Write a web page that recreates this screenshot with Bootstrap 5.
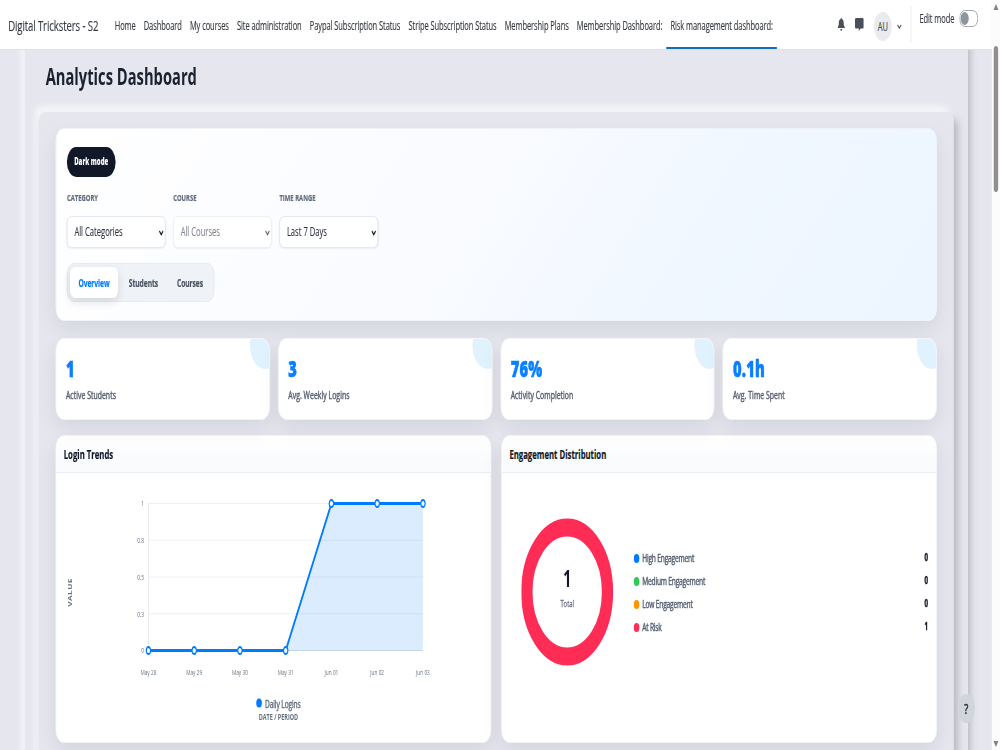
<!DOCTYPE html>
<html lang="en">

<head>
    <meta charset="UTF-8">
    <meta name="viewport" content="width=device-width, initial-scale=1.0">
    <title>Analytics Dashboard</title>
    <!-- Bootstrap CSS -->
    <link href="https://cdn.jsdelivr.net/npm/bootstrap@5.3.0/dist/css/bootstrap.min.css" rel="stylesheet">
    <style>
        body {
            font-family: "Open Sans", "Noto Sans", sans-serif;
            color: #1d2433;
            background: #e5e6ee;
        }

        .viewport {
            width: 1000px;
            height: 750px;
            overflow: hidden;
        }

        /* 1600px wide layout, narrowed to the window */
        .stage {
            width: 1600px;
            height: 750px;
            overflow: hidden;
            transform: scaleX(.625);
            transform-origin: 0 0;
        }

        /* top bar */
        .topbar {
            height: 49px;
            position: relative;
            z-index: 2;
            padding-left: 13px;
            box-shadow: 0 1px 0 #dee2e6;
        }

        .brand {
            width: 164px;
            padding-top: 1px;
            font-size: 15.3px;
            letter-spacing: -.15px;
            color: #343a40;
            -webkit-text-stroke: .15px;
        }

        .topnav {
            font-size: 12px;
            letter-spacing: -.115px;
            color: #343a40;
            -webkit-text-stroke: .15px;
        }

        .topnav a {
            height: 49px;
            padding: 3px 6.5px 0;
            color: inherit;
            text-decoration: none;
            white-space: nowrap;
            display: flex;
            align-items: center;
        }

        .topnav .current {
            border-bottom: 2.5px solid #0f6cbf;
            padding-top: 5.5px;
        }

        .avatar {
            width: 29px;
            height: 29px;
            background: #e9ebef;
            color: #495057;
            font-size: 12px;
            -webkit-text-stroke: .2px;
        }

        .edit-box {
            height: 37px;
            width: 130px;
            border-left: 1px solid #dee2e6;
            margin-left: 14px;
            padding-left: 13px;
            font-size: 12px;
            letter-spacing: -.1px;
            color: #343a40;
            -webkit-text-stroke: .15px;
        }

        .scroller {
            width: 13px;
            background: #fcfcfc;
        }

        .thumb {
            width: 7px;
            height: 146px;
            border-radius: 4px;
            background: #918d91;
        }

        /* raised panels */
        .outer-panel {
            width: 1508px;
            margin: -20px 0 0 40px;
            height: 760px;
            padding: 20px 22px 0;
            box-shadow: 6px 6px 8px #b9babf, -6px -6px 8px #f5f6f9;
        }

        .page-title {
            height: 63px;
            padding: 10px 0 0 11px;
            font-size: 23.5px;
            font-weight: 700;
            letter-spacing: .03px;
            color: #1a2230;
        }

        .inner-panel {
            height: 700px;
            border-radius: 9px 9px 0 0;
            padding: 16px 27px 0 27px;
            box-shadow: 6px 6px 9px #b9babf, -6px -6px 9px #f5f6f9;
        }

        .tile {
            background: #fff;
            border: 1px solid #f3f5f9;
            border-radius: 13px;
            box-shadow: 0 8px 26px rgba(15, 23, 42, .08);
        }

        .filters {
            height: 193px;
            padding: 18px 17px 0;
            background: linear-gradient(135deg, #fff 0, #f9fbff 45%, #f0f7ff 74%, #edf6ff 100%);
        }

        .filter-row {
            gap: 12px;
            margin-top: 14px;
        }

        .dark-btn {
            width: 78px;
            height: 30px;
            border: 0;
            border-radius: 15px;
            background: #111827;
            color: #fff;
            font-size: 9.7px;
            font-weight: 800;
            padding: 1px 0 0;
        }

        .field {
            width: 158px;
        }

        .field-name {
            height: 25px;
            font-size: 9.4px;
            line-height: 13px;
            font-weight: 700;
            letter-spacing: .05px;
            color: #5f6b7d;
            -webkit-text-stroke: .2px;
        }

        .picker {
            height: 32px;
            border: 1px solid #dfe4ec;
            border-radius: 7px;
            background: #fff;
            padding: 1px 2px 0 11px;
            font-size: 12.2px;
            letter-spacing: 0;
            color: #2c333f;
            box-shadow: 0 1px 2px rgba(15, 23, 42, .06);
            -webkit-text-stroke: .1px;
        }

        .picker.off {
            color: #80868f;
            border-color: #e9ecf2;
        }

        .switcher {
            width: 236px;
            height: 39px;
            margin-top: 15px;
            border: 1px solid #e2e8f0;
            border-radius: 11px;
            background: #eff2f7;
            padding: 0 4px;
            font-size: 10.7px;
            font-weight: 700;
            letter-spacing: -.08px;
            color: #4a5462;
            -webkit-text-stroke: .2px;
        }

        .switcher div {
            height: 31px;
            line-height: 32px;
            text-align: center;
            border-radius: 8px;
        }

        .switcher .on {
            width: 77px;
            background: #fff;
            color: #007bff;
            box-shadow: 0 4px 12px rgba(15, 23, 42, .12);
        }

        .switcher .tab-students {
            width: 81px;
        }

        .switcher .tab-courses {
            width: 68px;
        }

        .stats {
            gap: 13px;
            margin-top: 17px;
        }

        .stat {
            position: relative;
            overflow: hidden;
            height: 82px;
            padding: 15px 15.5px 0;
        }

        .stat::after {
            content: "";
            position: absolute;
            width: 48px;
            height: 48px;
            top: -18px;
            right: -17px;
            border-radius: 50%;
            background: #e1f2ff;
        }

        .stat-num {
            font-size: 23.5px;
            line-height: 28px;
            font-weight: 800;
            letter-spacing: .3px;
            color: #0a7fff;
            -webkit-text-stroke: .6px;
        }

        .stat-name {
            font-size: 11px;
            line-height: 15px;
            margin-top: 5px;
            letter-spacing: .07px;
            color: #5c6675;
            -webkit-text-stroke: .5px;
        }

        .charts {
            gap: 16px;
            margin-top: 15px;
        }

        .chart-tile {
            height: 308px;
            overflow: hidden;
        }

        .chart-head {
            height: 37px;
            line-height: 37px;
            padding-left: 12px;
            font-size: 12.4px;
            font-weight: 700;
            letter-spacing: 0;
            color: #101828;
            border-bottom: 1px solid #e9edf3;
            background: linear-gradient(#fff, #f8fafc);
            -webkit-text-stroke: .2px;
        }

        .chart-tile svg text {
            fill: #66717f;
        }

        .ring-wrap {
            width: 150px;
            margin-left: 29.5px;
        }

        .levels {
            margin: 74px 13.5px 0 31px;
            font-size: 10.6px;
            letter-spacing: -.28px;
            color: #556172;
            -webkit-text-stroke: .45px;
        }

        .level {
            height: 23px;
        }

        .level b {
            font-size: 9.8px;
            color: #111827;
        }

        .dot {
            width: 9px;
            height: 9px;
            border-radius: 50%;
            margin-right: 5px;
        }

        .help-btn {
            position: absolute;
            left: 1532px;
            top: 694px;
            width: 28px;
            height: 29px;
            border-radius: 50%;
            background: #d0d5dc;
            font-size: 15px;
            z-index: 3;
            -webkit-text-stroke: .5px;
        }
    </style>
</head>

<body>
    <div class="viewport">
        <div class="stage d-flex position-relative">
            <div class="flex-grow-1">
                <nav class="topbar bg-white d-flex align-items-center">
                    <div class="brand">Digital Tricksters - S2</div>
                    <div class="topnav d-flex">
                        <a href="#">Home</a>
                        <a href="#">Dashboard</a>
                        <a href="#">My courses</a>
                        <a href="#">Site administration</a>
                        <a href="#">Paypal Subscription Status</a>
                        <a href="#">Stripe Subscription Status</a>
                        <a href="#">Membership Plans</a>
                        <a href="#">Membership Dashboard:</a>
                        <a href="#" class="current">Risk management dashboard:</a>
                    </div>
                    <div class="d-flex align-items-center ms-auto">
                        <svg width="12" height="13" viewBox="0 0 12 13" fill="#495057">
                            <path d="M6 0c.6 0 1 .4 1 1 1.900.4 2.900 1.900 2.900 3.800 0 2.300.7 3.400 1.700 4.300v1H.4v-1C1.400 8.200 2.100 7.100 2.100 4.800 2.100 2.900 3.100 1.400 5 1c0-.6.4-1 1-1zM4.500 10.900h3C7.500 12 6.900 12.700 6 12.700S4.500 12 4.500 10.900z" />
                        </svg>
                        <svg class="ms-3" width="14" height="13" viewBox="0 0 14 13" fill="#495057">
                            <path d="M1.500 0h11Q14 0 14 1.500v7.500q0 1.500-1.500 1.500H9L6 13v-2.500H1.500Q0 10.500 0 9V1.500Q0 0 1.500 0z" />
                        </svg>
                        <div class="avatar rounded-circle d-flex align-items-center justify-content-center ms-3 me-1 mt-1">AU</div>
                        <svg class="ms-1 mt-1" width="8" height="6" viewBox="0 0 8 6" fill="none" stroke="#495057" stroke-width="1.500">
                            <path d="M1 1l3 3 3-3" />
                        </svg>
                        <div class="edit-box d-flex align-items-start">
                            <span class="pt-1">Edit mode</span>
                            <svg class="ms-2 mt-1" width="30" height="17" viewBox="0 0 30 17">
                                <rect x=".5" y=".5" width="29" height="16" rx="8" fill="#fff" stroke="#8f959e" />
                                <circle cx="8.500" cy="8.500" r="6.500" fill="#8f959e" />
                            </svg>
                        </div>
                    </div>
                </nav>

                <div class="outer-panel">
                    <div class="page-title">Analytics Dashboard</div>
                    <div class="inner-panel">
                        <div class="tile filters">
                            <button class="dark-btn d-block">Dark mode</button>
                            <div class="filter-row d-flex">
                                <div class="field">
                                    <div class="field-name">CATEGORY</div>
                                    <div class="picker d-flex align-items-center justify-content-between">All Categories
                                        <svg width="8" height="6" viewBox="0 0 8 6" fill="none" stroke="#1d2433" stroke-width="1.800">
                                            <path d="M1 1l3 3.500 3-3.500" />
                                        </svg>
                                    </div>
                                </div>
                                <div class="field">
                                    <div class="field-name">COURSE</div>
                                    <div class="picker off d-flex align-items-center justify-content-between">All Courses
                                        <svg width="8" height="6" viewBox="0 0 8 6" fill="none" stroke="#6b727d" stroke-width="1.800">
                                            <path d="M1 1l3 3.500 3-3.500" />
                                        </svg>
                                    </div>
                                </div>
                                <div class="field">
                                    <div class="field-name">TIME RANGE</div>
                                    <div class="picker d-flex align-items-center justify-content-between">Last 7 Days
                                        <svg width="8" height="6" viewBox="0 0 8 6" fill="none" stroke="#1d2433" stroke-width="1.800">
                                            <path d="M1 1l3 3.500 3-3.500" />
                                        </svg>
                                    </div>
                                </div>
                            </div>
                            <div class="switcher d-flex align-items-center">
                                <div class="on">Overview</div>
                                <div class="tab-students">Students</div>
                                <div class="tab-courses">Courses</div>
                            </div>
                        </div>

                        <div class="stats d-flex">
                            <div class="tile stat flex-fill w-100">
                                <div class="stat-num">1</div>
                                <div class="stat-name">Active Students</div>
                            </div>
                            <div class="tile stat flex-fill w-100">
                                <div class="stat-num">3</div>
                                <div class="stat-name">Avg. Weekly Logins</div>
                            </div>
                            <div class="tile stat flex-fill w-100">
                                <div class="stat-num">76%</div>
                                <div class="stat-name">Activity Completion</div>
                            </div>
                            <div class="tile stat flex-fill w-100">
                                <div class="stat-num">0.1h</div>
                                <div class="stat-name">Avg. Time Spent</div>
                            </div>
                        </div>

                        <div class="charts d-flex">
                            <div class="tile chart-tile w-100">
                                <div class="chart-head">Login Trends</div>
                                <svg class="d-block" width="694" height="269" viewBox="0.500 1 694 269" id="loginChart"></svg>
                            </div>
                            <div class="tile chart-tile w-100">
                                <div class="chart-head">Engagement Distribution</div>
                                <div class="d-flex">
                                    <div class="ring-wrap">
                                        <svg class="d-block" width="150" height="240" viewBox="0 0 150 240">
                                            <circle cx="74.500" cy="119" r="64.500" fill="none" stroke="#ff2d55" stroke-width="18" />
                                            <text x="74.500" y="114" text-anchor="middle" font-size="22.500" font-weight="700" style="fill:#111827">1</text>
                                            <text x="74.500" y="134" text-anchor="middle" font-size="9.400" stroke="#66717f" stroke-width=".3">Total</text>
                                        </svg>
                                    </div>
                                    <div class="levels flex-grow-1" id="levels"></div>
                                </div>
                            </div>
                        </div>
                    </div>
                </div>
            </div>

            <!-- scrollbar -->
            <div class="scroller d-flex flex-column align-items-center justify-content-between">
                <svg width="9" height="46" viewBox="0 0 9 46" fill="#858085">
                    <path d="M4.500 4L8.500 10H.5z" />
                </svg>
                <div class="thumb"></div>
                <svg class="mt-auto" width="9" height="12" viewBox="0 0 9 12" fill="#858085">
                    <path d="M4.500 9L8.500 3H.5z" />
                </svg>
            </div>

            <div class="help-btn d-flex align-items-center justify-content-center">?</div>
        </div>
    </div>

    <!-- Bootstrap JS -->
    <script src="https://cdn.jsdelivr.net/npm/bootstrap@5.3.0/dist/js/bootstrap.bundle.min.js"></script>
    <script>
        // Login trends
        const days = ['May 28', 'May 29', 'May 30', 'May 31', 'Jun 01', 'Jun 02', 'Jun 03'];
        const logins = [0, 0, 0, 0, 1, 1, 1];
        const ticks = ['0', '0.3', '0.5', '0.8', '1'];
        const left = 148, step = 73.2, bottom = 178.5, plotHeight = 147;

        const points = logins.map((v, i) => [left + i * step, bottom - v * plotHeight]);
        const right = left + 6 * step;
        let svg = '';

        ticks.forEach((t, i) => {
            const y = bottom - i * plotHeight / 4;
            svg += `<path d="M${left} ${y}H${right}" stroke="${i ? '#e9edf4' : '#cbd5e1'}"/>`;
            svg += `<text x="${left - 7}" y="${y + 3}" text-anchor="end" font-size="7.8">${t}</text>`;
        });
        svg += `<path d="M${left} ${bottom - plotHeight}V${bottom}" stroke="#dfe5ee" stroke-width="1.3"/>`;
        svg += `<path d="M${points.join('L')}V${bottom}H${left}Z" fill="#007bff" fill-opacity=".14"/>`;
        svg += `<path d="M${points.join('L')}" fill="none" stroke="#007bff" stroke-width="2.8"/>`;
        points.forEach(([x, y], i) => {
            svg += `<circle cx="${x}" cy="${y}" r="3.5" fill="#fff" stroke="#007bff" stroke-width="1.9"/>`;
            svg += `<text x="${x}" y="203" text-anchor="middle" font-size="7.6">${days[i]}</text>`;
        });
        svg += '<text transform="translate(25.5 120.5) rotate(-90)" text-anchor="middle" font-size="8.3" font-weight="700" letter-spacing=".4">VALUE</text>';
        svg += '<circle cx="325" cy="231" r="4.5" fill="#007bff"/>';
        svg += '<text x="334.5" y="236" font-size="10.6" letter-spacing="-.15" stroke="#66717f" stroke-width=".45">Daily Logins</text>';
        svg += '<text x="356" y="248" text-anchor="middle" font-size="8.8" font-weight="700" letter-spacing="-.05">DATE / PERIOD</text>';
        document.getElementById('loginChart').innerHTML = svg;

        // Engagement levels
        const levels = [
            ['High Engagement', 0, '#007bff'],
            ['Medium Engagement', 0, '#34c759'],
            ['Low Engagement', 0, '#ff9500'],
            ['At Risk', 1, '#ff2d55']
        ];
        document.getElementById('levels').innerHTML = levels.map(([name, count, color]) =>
            `<div class="level d-flex align-items-center"><span class="dot" style="background:${color}"></span>${name}<b class="ms-auto">${count}</b></div>`
        ).join('');
    </script>
</body>

</html>
